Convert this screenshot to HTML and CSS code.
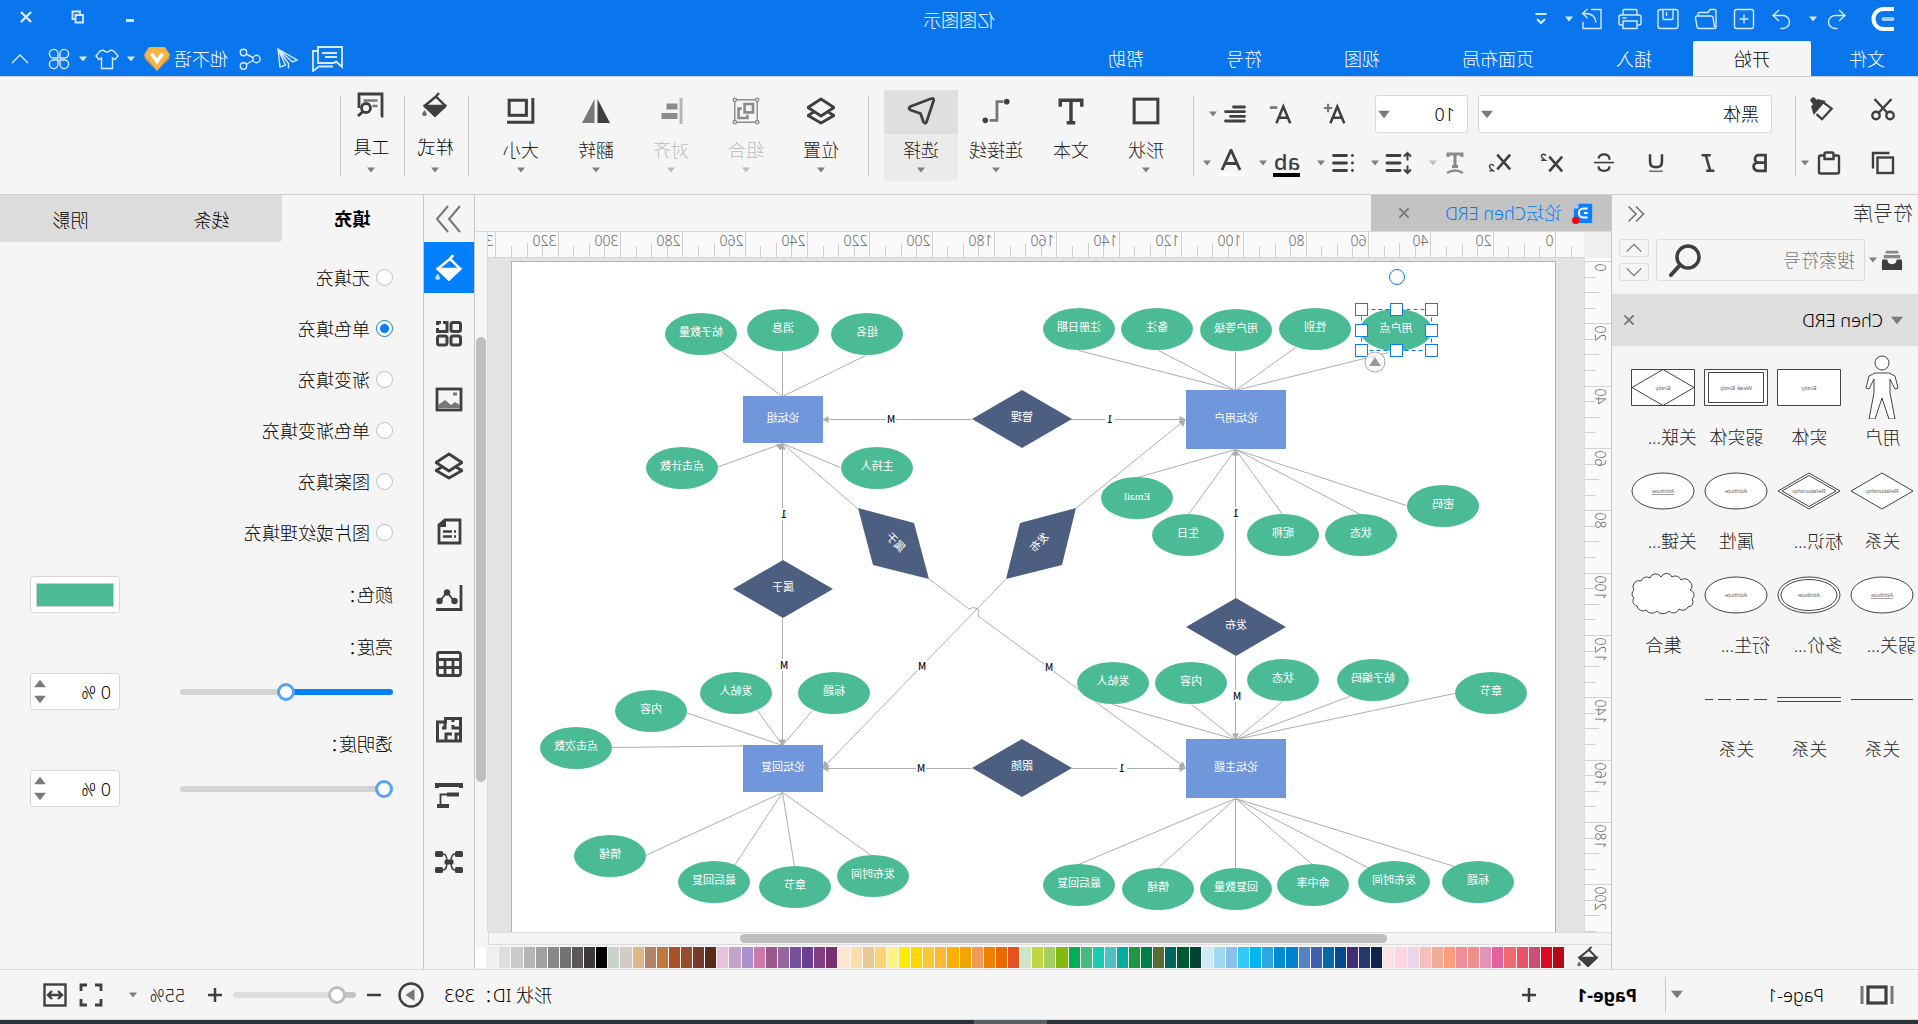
FILE: index.html
```html
<!DOCTYPE html>
<html lang="zh-CN">
<head>
<meta charset="utf-8">
<title>亿图图示</title>
<link rel="stylesheet" href="styles.css">
</head>
<body>
<svg class="defs" aria-hidden="true">
  <symbol id="logo" viewBox="0 0 24 24"><path d="M1 2h10.500a10 10 0 0 1 0 20H1" fill="none" stroke="#fff" stroke-width="4"/><path d="M2.500 12h9" stroke="#9fccfb" stroke-width="4" stroke-linecap="round"/></symbol>
  <symbol id="undo" viewBox="0 0 24 24"><path d="M9 3 3 8.500 9 14M3.500 8.500H13a6.500 6.500 0 0 1 0 13h-2.500"/></symbol>
  <symbol id="redo" viewBox="0 0 24 24"><path d="m15 3 6 5.500L15 14M20.500 8.500H11a6.500 6.500 0 0 0 0 13h2.500"/></symbol>
  <symbol id="new" viewBox="0 0 24 24"><rect x="2.500" y="2.500" width="19" height="19" rx="2"/><path d="M12 7.500v9M7.500 12h9"/></symbol>
  <symbol id="open" viewBox="0 0 24 24"><path d="M2 20V4q0-1.500 1.500-1.500H8l2 3h8.500q1.500 0 1.500 1.500v1.500M2 20q0 1.500 2 1.500h15q1.500 0 2-1.500l1.500-9.500q0-1.500-1.500-1.500H7Q5.500 9 5 10.500L3.500 20"/></symbol>
  <symbol id="save" viewBox="0 0 24 24"><rect x="2" y="2.500" width="20" height="19" rx="2.500"/><path d="M7 2.500V11q0 1.500 1.500 1.500h7Q17 12.500 17 11V2.500M13.500 5v4"/></symbol>
  <symbol id="print" viewBox="0 0 24 24"><path d="M5 8V4q0-1.500 1.500-1.500h11Q19 2.500 19 4v4M5 18H3q-2 0-2-2v-6q0-2 2-2h18q2 0 2 2v6q0 2-2 2h-2M5 14h14v7.500H5zM15.500 11h4"/></symbol>
  <symbol id="export" viewBox="0 0 24 24"><path d="M13 2.500H3v19h18V15M8 15.500C8.500 9 12 6 20.500 6.500M16.500 2l5 4.500-5 4.500"/></symbol>
  <symbol id="more" viewBox="0 0 24 24"><path d="M6.500 7h11M8 12l4 4 4-4"/></symbol>
  <symbol id="minimize" viewBox="0 0 24 24"><path d="M8 15.500h8" stroke-width="3"/></symbol>
  <symbol id="restore" viewBox="0 0 24 24"><path d="M7 10h7.500v7.500H7zM10 9V6.500h7.500V14H15" stroke-width="1.800"/></symbol>
  <symbol id="close" viewBox="0 0 24 24"><path d="m7 7 10 10M17 7 7 17"/></symbol>
  <symbol id="message" viewBox="0 0 32 26"><path d="M1 1h24v16H9l-2-1.500L1 21zM6 7h15M6 11h12M25 5h5v20l-6-4.500H10"/></symbol>
  <symbol id="send" viewBox="0 0 24 24"><path d="M21 2 2 13l4.500 2L21 2l-2 18-5.500-1.800L21 2 10.500 16.500v5"/></symbol>
  <symbol id="share" viewBox="0 0 24 24"><circle cx="5.500" cy="12" r="3.700"/><circle cx="18.500" cy="5.500" r="3.200"/><circle cx="18.500" cy="19" r="3.200"/><path d="m9 10.500 7-3.500M9 13.500l7 4"/></symbol>
  <symbol id="gem" viewBox="0 0 28 26"><path d="M6 1h16l5 8-13 16L1 9z" fill="#f6b344"/><path d="m1 9 13 16L27 9l-1 4-12 12L2 13z" fill="#d99d3c"/><path d="m8.500 7.500 5.500 8 5.500-8" fill="none" stroke="#fff" stroke-width="3.500"/></symbol>
  <symbol id="shirt" viewBox="0 0 24 24"><path d="M8 3q4 4 8 0l3 1 4 5-3 3.500-2.500-1.500v10.500h-11V11L4 12.500 1 9l4-5z"/></symbol>
  <symbol id="apps" viewBox="0 0 24 24"><path d="M11 11H6.500A4.300 4.300 0 1 1 11 6.500zM13 11h4.500A4.300 4.300 0 1 0 13 6.500zM11 13H6.500A4.300 4.300 0 1 0 11 17.500zM13 13h4.500A4.300 4.300 0 1 1 13 17.500z"/></symbol>
  <symbol id="up" viewBox="0 0 24 24"><path d="m4 16 8-8 8 8"/></symbol>
  <symbol id="down" viewBox="0 0 24 24"><path d="m4 8 8 8 8-8"/></symbol>
  <symbol id="caret" viewBox="0 0 8 6"><path d="M0 .5h8L4 5.500z" fill="currentColor" stroke="none"/></symbol>
  <symbol id="caret-up" viewBox="0 0 8 6"><path d="M0 5.500h8L4 .5z" fill="currentColor" stroke="none"/></symbol>

  <symbol id="cut" viewBox="0 0 24 24"><circle cx="5" cy="18.500" r="3.700"/><circle cx="19" cy="18.500" r="3.700"/><path d="M3.500 2 16 15.500M20.500 2 8 15.500"/></symbol>
  <symbol id="painter" viewBox="0 0 26 26"><path d="M22.500 3.500 19 7.500" stroke-width="6" stroke-linecap="round"/><path d="M12 5.500 2.500 12.500 13 24l6-5.500"/><path d="m11 5 10.500 12 2-6.500-6-7z" fill="currentColor"/></symbol>
  <symbol id="copy" viewBox="0 0 24 24"><rect x="2" y="6.500" width="15.500" height="15.500"/><path d="M5.500 2H22v15.500"/></symbol>
  <symbol id="paste" viewBox="0 0 24 24"><rect x="2" y="4.500" width="20" height="18" rx="1.500"/><path d="M7.500 3q0-1.500 1.500-1.500h6q1.500 0 1.500 1.500v5h-9z" fill="#f5f5f5"/></symbol>
  <symbol id="plus-a" viewBox="0 0 26 24"><path d="m3 22 7.500-18L18 22M5.500 16h10" stroke-width="2.800"/><path d="M20.500 1v9M16 5.500h9" stroke="#777"/></symbol>
  <symbol id="minus-a" viewBox="0 0 26 24"><path d="m3 22 7.500-18L18 22M5.500 16h10" stroke-width="2.800"/><path d="M17 5h8" stroke="#777" stroke-width="3"/></symbol>
  <symbol id="align-left" viewBox="0 0 24 24"><path d="M2.500 5h11M2.500 9.700h19M2.500 14.400h14M2.500 19h19" stroke-width="2.800" stroke-linecap="round"/></symbol>
  <symbol id="bold" viewBox="0 0 24 24"><path d="M6 3.500h7.500a4 4 0 0 1 0 8H6zM6 11.500h8.500a4.500 4.500 0 0 1 0 9H6z" stroke-width="3"/></symbol>
  <symbol id="italic" viewBox="0 0 24 24"><path d="M9 3.500h10M5 20.500h9M14.500 3.500l-5 17" stroke-width="2.800"/></symbol>
  <symbol id="underline" viewBox="0 0 24 24"><path d="M5.500 2.500v8q0 6 6.500 6t6.500-6v-8" stroke-width="2.800"/><path d="M4.500 21h15" stroke="#777" stroke-width="1.800"/></symbol>
  <symbol id="strike" viewBox="0 0 24 24"><path d="M18 7q-1-4.500-6-4.500T6 7v1.500M6 15.500q0 5 6 5t6-5"/><path d="M1 11.500h22" stroke-width="1.800"/></symbol>
  <symbol id="sup" viewBox="0 0 26 24"><path d="m2 5 14 16M16 5 2 21" stroke-width="2.800"/><path d="M20 4.500q0-2 2.200-2t2.200 2-4.200 4.500h4.600" stroke-width="1.500"/></symbol>
  <symbol id="sub" viewBox="0 0 26 24"><path d="m2 3 14 16M16 3 2 19" stroke-width="2.800"/><path d="M20 15.500q0-2 2.200-2t2.200 2-4.200 5h4.600" stroke-width="1.500"/></symbol>
  <symbol id="text-case" viewBox="0 0 24 24"><path d="M5 6V3h14v3M12 3v12M9 15.500h6" stroke-width="3"/><path d="M4 22q8-5 16 0"/></symbol>
  <symbol id="line-space" viewBox="0 0 28 24"><path d="M5.500 2.500v7M2 5.500l3.500-3.500L9 5.500M5.500 21.500v-7M2 18.500 5.500 22 9 18.500" stroke-width="2"/><path d="M13 4.500h13M13 12h13M13 19.500h13" stroke-width="2.800" stroke-linecap="round"/></symbol>
  <symbol id="bullets" viewBox="0 0 24 24"><path d="M2.500 4.500h.1M2.500 12h.1M2.500 19.500h.1M8.500 4.500h13M8.500 12h13M8.500 19.500h13" stroke-width="2.800" stroke-linecap="round"/></symbol>
  <symbol id="font-a" viewBox="0 0 28 28"><path d="m5 21 9-20 9 20M8 14.500h12" stroke-width="2.800"/><path d="M1 25.500h26" stroke="#fff" stroke-width="4"/></symbol>

  <symbol id="shape" viewBox="0 0 26 26"><rect x="2" y="2" width="22" height="22" stroke-width="2.800"/></symbol>
  <symbol id="text" viewBox="0 0 26 26"><path d="M3 9V3h20v6M13 3v20M9 24h8" stroke-width="3.200"/></symbol>
  <symbol id="connector" viewBox="0 0 30 26"><path d="M7 3h7v20h8" stroke="#777" stroke-width="3"/><circle cx="3.500" cy="3" r="3" fill="currentColor" stroke="none"/><circle cx="26.500" cy="23" r="3" fill="currentColor" stroke="none"/></symbol>
  <symbol id="select" viewBox="0 0 28 28"><path d="M2.500 1.500Q1 1.500 1.500 4l7 21q1 2.500 3 0l3-8.500 10-3.500q3-1.500 0-3.500L5 2z" stroke-width="2.800"/></symbol>
  <symbol id="layers" viewBox="0 0 28 28"><path d="M14 2 27 10.500 14 19 1 10.500zM7 15l-6 3.500L14 26l13-7.500-6-3.500" stroke-width="2.800" stroke-linejoin="round"/></symbol>
  <symbol id="group" viewBox="0 0 30 30"><path d="M3 3h24v24H3z" stroke-width="1.500"/><g fill="#f5f5f5" stroke-width="1.500"><circle cx="3" cy="3" r="1.800"/><circle cx="27" cy="3" r="1.800"/><circle cx="3" cy="27" r="1.800"/><circle cx="27" cy="27" r="1.800"/></g><path d="M7.500 7.500h9v9h-9zM19.500 12.500H23v10h-9.500V19" stroke-width="2.800"/></symbol>
  <symbol id="align" viewBox="0 0 26 28"><path d="M3 1v26" stroke="#b5b5b5" stroke-width="3"/><path d="M6.500 6.500h11v6h-11zM6.500 16h16v6h-16z" fill="currentColor" stroke="none"/></symbol>
  <symbol id="flip" viewBox="0 0 28 26"><path d="M12.500 1v24H0z" fill="currentColor" stroke="none"/><path d="M15.500 1v24H28z" fill="#777" stroke="none"/></symbol>
  <symbol id="size" viewBox="0 0 26 26"><path d="M2 1v22.500h24" stroke-width="2.800"/><rect x="8" y="3" width="16" height="14" stroke-width="2.800"/></symbol>
  <symbol id="bucket" viewBox="0 0 26 26"><path d="m9 1 4 4.500M12 4.500 23.500 14 13 23.500 2.500 14z" stroke-linejoin="round"/><path d="M3.500 14h19L13 23.500z" fill="currentColor"/><path d="M23.500 18q4.500 6 0 6t0-6" fill="currentColor" stroke="none" opacity=".75"/></symbol>
  <symbol id="tools" viewBox="0 0 28 26"><path d="M26 16V2H3v22h10M26 14V2" stroke-width="2.800" stroke-dasharray="60"/><path d="M7.500 8.500h14M7.500 14h5" stroke="#777"/><circle cx="19" cy="16" r="4.500" stroke-width="2.800"/><path d="m22 19.500 5 4.500" stroke-width="3"/></symbol>

  <symbol id="first" viewBox="0 0 24 24"><path d="m12 3-9 9 9 9M21 3l-9 9 9 9"/></symbol>
  <symbol id="last" viewBox="0 0 28 28"><path d="m3 1 11 13L3 27M15 1l11 13-11 13"/></symbol>
  <symbol id="library" viewBox="0 0 24 24"><path d="M5 2h14v3H5zM3 6.500h18V10H3z" fill="#888" stroke="none"/><path d="M1 13q0-1.500 1.500-1.500H7q0 5 5 5t5-5h4.500Q23 11.500 23 13v9q0 1-1 1H2q-1 0-1-1z" fill="currentColor" stroke="none"/></symbol>
  <symbol id="search" viewBox="0 0 34 34"><circle cx="14" cy="14" r="11" stroke-width="3.500"/><path d="m22 22 9 10" stroke-width="4" stroke-linecap="round"/></symbol>
  <symbol id="doc-logo" viewBox="0 0 24 24"><path d="M2 2h15l5 5v16H2z" fill="#0a80ff" stroke="none"/><path d="m17 2 5 5h-5z" fill="#9fd0ff" stroke="none"/><path d="M7 7h4.500a5 5 0 0 1 0 10H7M7 12h4" fill="none" stroke="#fff" stroke-width="2.200"/><circle cx="20" cy="20" r="4" fill="red" stroke="none"/></symbol>

  <symbol id="grid" viewBox="0 0 28 28"><g stroke-width="3"><rect x="2.500" y="2.500" width="9.500" height="9" rx="2"/><rect x="2.500" y="16" width="9.500" height="9" rx="2"/><rect x="16" y="16" width="9.500" height="9" rx="2"/><path d="M20 2.500h-4V11.500h9.500V8M22 2.500h3.500v2.500"/></g></symbol>
  <symbol id="picture" viewBox="0 0 28 28"><rect x="2" y="3" width="24" height="21" stroke-width="2.800"/><path d="M3 22v-3l5-3 4 3 6-5 7 5v3z" fill="#777" stroke="none"/><path d="M6 8h4" stroke-width="3" stroke="#777"/></symbol>
  <symbol id="page" viewBox="0 0 28 28"><path d="M3 2h15l6 5v18H3z" stroke-width="2.800"/><path d="M17 2v7h8z" fill="currentColor" stroke="none"/><path d="M7 13.500h2M11 13.500h9M7 18.500h2M11 18.500h9"/></symbol>
  <symbol id="chart" viewBox="0 0 28 28"><path d="M2 1v24.500h25" stroke-width="2.800"/><path d="m9 17 7-9 7 9" stroke-width="1.800"/><g fill="currentColor" stroke="none"><circle cx="8.500" cy="17" r="3.200"/><circle cx="16" cy="8.500" r="3.200"/><circle cx="23.500" cy="17" r="3.200"/></g></symbol>
  <symbol id="table" viewBox="0 0 28 28"><rect x="2.500" y="2.500" width="23" height="23" rx="2" stroke-width="2.800"/><path d="M2 9.500h24M2 17.500h24M10 10v15M18 10v15" stroke-width="2.800"/></symbol>
  <symbol id="plan" viewBox="0 0 28 28"><path d="M2.500 2.500h15V6h8v19h-23zM2 12h8V9M10 2.500V6M2 18h5v7M17 25v-7h-6M18 6v6h3" stroke-width="3"/></symbol>
  <symbol id="gantt" viewBox="0 0 28 28"><path d="M2 6V3h24v3M4 12.500h12M14 24h12" stroke-width="4"/><path d="M15 12.500h7.500V22" stroke-width="1.800"/></symbol>
  <symbol id="mind" viewBox="0 0 28 28"><g fill="currentColor" stroke="none"><rect x="0" y="3" width="8" height="6" rx="1.500"/><rect x="20" y="3" width="8" height="6" rx="1.500"/><rect x="0" y="19" width="8" height="6" rx="1.500"/><rect x="20" y="19" width="8" height="6" rx="1.500"/><rect x="9.500" y="11.500" width="9" height="5" rx="1.500"/></g><path d="M8 6q4 0 4 8t-4 8M20 6q-4 0-4 8t4 8" stroke-width="1.500"/></symbol>

  <symbol id="pages" viewBox="0 0 34 22"><path d="M2 2v18M32 2v18" stroke="#777" stroke-width="3"/><rect x="8" y="3" width="18" height="16" stroke-width="3.200"/></symbol>
  <symbol id="plus" viewBox="0 0 16 16"><path d="M8 1v14M1 8h14" stroke-width="2.500"/></symbol>
  <symbol id="minus" viewBox="0 0 16 16"><path d="M1 8h14" stroke-width="2.500"/></symbol>
  <symbol id="play" viewBox="0 0 26 26"><circle cx="13" cy="13" r="11.500"/><path d="m9.500 7 9 6-9 6z" fill="#777" stroke="none"/></symbol>
  <symbol id="fit" viewBox="0 0 24 24"><path d="M2 8V2h6M16 2h6v6M22 16v6h-6M8 22H2v-6" stroke-width="2.800"/></symbol>
  <symbol id="fit-width" viewBox="0 0 24 24"><rect x="1.500" y="1.500" width="21" height="21"/><path d="M6 12h12M9 8l-4 4 4 4M15 8l4 4-4 4"/></symbol>
</svg>

<div class="app">
  <header class="top">
    <div class="titlebar">
      <div class="quick">
        <svg class="ic logo"><use href="#logo"/></svg>
        <button aria-label="撤销"><svg class="ic thin"><use href="#undo"/></svg></button>
        <svg class="caret"><use href="#caret"/></svg>
        <button class="after-caret" aria-label="恢复"><svg class="ic thin"><use href="#redo"/></svg></button>
        <button aria-label="新建"><svg class="ic thin"><use href="#new"/></svg></button>
        <button aria-label="打开"><svg class="ic thin"><use href="#open"/></svg></button>
        <button aria-label="保存"><svg class="ic thin"><use href="#save"/></svg></button>
        <button aria-label="打印"><svg class="ic thin"><use href="#print"/></svg></button>
        <button aria-label="导出"><svg class="ic thin"><use href="#export"/></svg></button>
        <svg class="caret"><use href="#caret"/></svg>
        <button aria-label="更多"><svg class="ic thin2 bright"><use href="#more"/></svg></button>
      </div>
      <h1>亿图图示</h1>
      <div class="window">
        <button aria-label="最小化"><svg class="ic"><use href="#minimize"/></svg></button>
        <button aria-label="还原"><svg class="ic"><use href="#restore"/></svg></button>
        <button aria-label="关闭"><svg class="ic"><use href="#close"/></svg></button>
      </div>
    </div>
    <div class="menubar">
      <nav class="tabs">
        <button class="first-tab">文件</button><button class="on">开始</button><button>插入</button><button>页面布局</button><button>视图</button><button>符号</button><button>帮助</button>
      </nav>
      <div class="account">
        <button aria-label="消息"><svg class="ic-wide"><use href="#message"/></svg></button>
        <button aria-label="发送"><svg class="ic thin"><use href="#send"/></svg></button>
        <button aria-label="分享"><svg class="ic thin"><use href="#share"/></svg></button>
        <a href="#user" class="user">他不语<svg class="gem"><use href="#gem"/></svg></a>
        <svg class="caret"><use href="#caret"/></svg>
        <button class="skin" aria-label="皮肤"><svg class="ic thin"><use href="#shirt"/></svg></button>
        <svg class="caret"><use href="#caret"/></svg>
        <button class="skin" aria-label="应用"><svg class="ic thin"><use href="#apps"/></svg></button>
        <button aria-label="收起功能区"><svg class="ic thin"><use href="#up"/></svg></button>
      </div>
    </div>
  </header>

  <section class="ribbon">
    <div class="clipboard">
      <button aria-label="剪切"><svg class="ic"><use href="#cut"/></svg></button>
      <button aria-label="格式刷"><svg class="ic"><use href="#painter"/></svg></button>
      <button aria-label="复制"><svg class="ic"><use href="#copy"/></svg></button>
      <button aria-label="粘贴" class="split"><svg class="ic"><use href="#paste"/></svg><svg class="caret"><use href="#caret"/></svg></button>
    </div>
    <i class="sep"></i>
    <div class="font">
      <div class="row">
        <span class="combo face"><select aria-label="字体"><option>黑体</option></select><svg class="caret big"><use href="#caret"/></svg></span>
        <span class="combo pt"><select aria-label="字号"><option>10</option></select><svg class="caret big"><use href="#caret"/></svg></span>
        <button class="grow" aria-label="增大字号"><svg class="ic"><use href="#plus-a"/></svg></button>
        <button class="grow" aria-label="减小字号"><svg class="ic"><use href="#minus-a"/></svg></button>
        <button class="split" aria-label="对齐方式"><svg class="ic"><use href="#align-left"/></svg><svg class="caret"><use href="#caret"/></svg></button>
      </div>
      <div class="row styles">
        <button aria-label="加粗"><svg class="ic sm"><use href="#bold"/></svg></button>
        <button aria-label="斜体"><svg class="ic sm"><use href="#italic"/></svg></button>
        <button aria-label="下划线"><svg class="ic sm"><use href="#underline"/></svg></button>
        <button aria-label="删除线"><svg class="ic sm"><use href="#strike"/></svg></button>
        <button aria-label="上标"><svg class="ic"><use href="#sup"/></svg></button>
        <button aria-label="下标"><svg class="ic"><use href="#sub"/></svg></button>
        <button class="split dim" aria-label="文字方向"><svg class="ic"><use href="#text-case"/></svg><svg class="caret"><use href="#caret"/></svg></button>
        <button class="split" aria-label="行距"><svg class="ic-28"><use href="#line-space"/></svg><svg class="caret"><use href="#caret"/></svg></button>
        <button class="split" aria-label="项目符号"><svg class="ic"><use href="#bullets"/></svg><svg class="caret"><use href="#caret"/></svg></button>
        <button class="split" aria-label="文字背景"><span class="ab">ab</span><svg class="caret"><use href="#caret"/></svg></button>
        <button class="split" aria-label="字体颜色"><svg class="ic-28"><use href="#font-a"/></svg><svg class="caret"><use href="#caret"/></svg></button>
      </div>
    </div>
    <i class="sep"></i>
    <div class="tools">
      <button><svg><use href="#shape"/></svg>形状<svg class="caret"><use href="#caret"/></svg></button>
      <button><svg><use href="#text"/></svg>文本</button>
      <button><svg><use href="#connector"/></svg>连接线<svg class="caret"><use href="#caret"/></svg></button>
      <button class="on"><svg><use href="#select"/></svg>选择<svg class="caret"><use href="#caret"/></svg></button>
    </div>
    <i class="sep"></i>
    <div class="tools">
      <button><svg><use href="#layers"/></svg>位置<svg class="caret"><use href="#caret"/></svg></button>
      <button disabled><svg><use href="#group"/></svg>组合<svg class="caret"><use href="#caret"/></svg></button>
      <button disabled><svg><use href="#align"/></svg>对齐<svg class="caret"><use href="#caret"/></svg></button>
      <button><svg><use href="#flip"/></svg>翻转<svg class="caret"><use href="#caret"/></svg></button>
      <button><svg><use href="#size"/></svg>大小<svg class="caret"><use href="#caret"/></svg></button>
    </div>
    <i class="sep"></i>
    <div class="tools narrow"><button><svg><use href="#bucket"/></svg>样式<svg class="caret"><use href="#caret"/></svg></button></div>
    <i class="sep"></i>
    <div class="tools narrow"><button><svg><use href="#tools"/></svg>工具<svg class="caret"><use href="#caret"/></svg></button></div>
    <i class="sep"></i>
  </section>

  <main class="work">
    <aside class="symbols">
      <div class="head"><h2>符号库</h2><button aria-label="收起"><svg class="ic-20"><use href="#first"/></svg></button></div>
      <div class="find">
        <button class="lib" aria-label="符号库菜单"><svg class="ic-22"><use href="#library"/></svg><svg class="caret"><use href="#caret"/></svg></button>
        <label class="box"><input type="text" placeholder="搜索符号" aria-label="搜索符号"><svg class="glass"><use href="#search"/></svg></label>
        <div class="steps"><button aria-label="上"><svg class="ic-22 thin"><use href="#up"/></svg></button><button aria-label="下"><svg class="ic-22 thin"><use href="#down"/></svg></button></div>
      </div>
      <div class="section"><svg class="caret big"><use href="#caret"/></svg><h3>Chen ERD</h3><button aria-label="关闭"><svg class="ic-22"><use href="#close"/></svg></button></div>
      <ul class="list">
        <li><svg viewBox="0 0 64 64"><path d="M25 18h14l6 3 3 12-3 1-5-10v14l5 26h-6l-7-21-7 21h-6l5-26V24l-5 10-3-1 3-12z"/><circle cx="32" cy="8" r="7"/></svg><span>用户</span></li>
        <li><svg viewBox="0 0 64 64"><path d="M.5 14.500h63v36H.5z"/><text x="32" y="35">Entity</text></svg><span>实体</span></li>
        <li><svg viewBox="0 0 64 64"><path d="M.5 14.500h63v36H.5zM4.500 17.500h55v30h-55z"/><text x="32" y="35">Weak Entity</text></svg><span>弱实体</span></li>
        <li><svg viewBox="0 0 64 64"><path d="M.5 14.500h63v36H.5zM32 14.500l31 18-31 18-31-18z"/><text x="32" y="35">Entity</text></svg><span class="cut">关联...</span></li>
        <li><svg viewBox="0 0 64 64"><path d="m32 14 31 18-31 18L1 32z"/><text x="32" y="34">Relationship</text></svg><span>关系</span></li>
        <li><svg viewBox="0 0 64 64"><path d="m32 14 31 18-31 18L1 32zM32 16.500 59 32 32 47.500 5 32z"/><text x="32" y="34">Relationship</text></svg><span class="cut">标识...</span></li>
        <li><svg viewBox="0 0 64 64"><ellipse cx="32" cy="32" rx="31" ry="18"/><text x="32" y="34">Attribute</text></svg><span>属性</span></li>
        <li><svg viewBox="0 0 64 64"><ellipse cx="32" cy="32" rx="31" ry="18"/><text x="32" y="34" class="key">Attribute</text></svg><span class="cut">关键...</span></li>
        <li><svg viewBox="0 0 64 64"><ellipse cx="32" cy="32" rx="31" ry="18"/><text x="32" y="34" class="key">Attribute</text></svg><span class="cut">弱关...</span></li>
        <li><svg viewBox="0 0 64 64"><ellipse cx="32" cy="32" rx="31" ry="18"/><ellipse cx="32" cy="32" rx="28" ry="15.500"/><text x="32" y="34">Attribute</text></svg><span class="cut">多价...</span></li>
        <li><svg viewBox="0 0 64 64"><ellipse cx="32" cy="32" rx="31" ry="18"/><text x="32" y="34">Attribute</text></svg><span class="cut">衍生...</span></li>
        <li><svg viewBox="0 0 64 64"><path d="M5 27a5 5 0 0 1 0-8 6 6 0 0 1 9-2 6 6 0 0 1 9-3 6 6 0 0 1 11 0 6 6 0 0 1 11 1 6 6 0 0 1 9 3 6 6 0 0 1 7 9 5 5 0 0 1 0 8 5 5 0 0 1-3 8 6 6 0 0 1-9 4 7 7 0 0 1-11 1 8 8 0 0 1-12 0 6 6 0 0 1-10-2 6 6 0 0 1-9-2 5 5 0 0 1-4-8 5 5 0 0 1 2-9z"/></svg><span>集合</span></li>
        <li><svg viewBox="0 0 64 64"><path d="M1 32.500h62"/></svg><span>关系</span></li>
        <li><svg viewBox="0 0 64 64"><path d="M0 30.500h64M0 34.500h64"/></svg><span>关系</span></li>
        <li><svg viewBox="0 0 64 64"><path d="M1 32.500h62" stroke-dasharray="13 5"/></svg><span>关系</span></li>
      </ul>
    </aside>

    <section class="doc">
      <div class="doctabs"><div class="doctab"><svg class="ic-22"><use href="#doc-logo"/></svg><span>论坛Chen ERD</span><button aria-label="关闭"><svg class="ic-22"><use href="#close"/></svg></button></div></div>
      <div class="stage">
        <div class="corner"></div>
        <svg class="ruler-x" id="ruler-x"></svg>
        <div class="vbar"><i></i></div>
        <svg class="ruler-y" id="ruler-y"></svg>
        <div class="canvas"><div class="sheet"><svg id="diagram" width="1043" height="670" viewBox="363 262 1043 670"></svg></div></div>
        <div class="hbar"><i></i></div>
      </div>
      <div class="palette"><svg class="ic-22"><use href="#bucket"/></svg><div id="swatches"></div></div>
    </section>

    <nav class="dock">
      <button class="collapse" aria-label="收起"><svg class="ic-28 thin2"><use href="#last"/></svg></button>
      <button class="on" aria-label="填充"><svg class="ic-28"><use href="#bucket"/></svg></button>
      <button aria-label="主题"><svg class="ic-28"><use href="#grid"/></svg></button>
      <button aria-label="图片"><svg class="ic-28"><use href="#picture"/></svg></button>
      <button aria-label="图层"><svg class="ic-28"><use href="#layers"/></svg></button>
      <button aria-label="页面"><svg class="ic-28"><use href="#page"/></svg></button>
      <button aria-label="图表"><svg class="ic-28"><use href="#chart"/></svg></button>
      <button aria-label="表格"><svg class="ic-28"><use href="#table"/></svg></button>
      <button aria-label="平面图"><svg class="ic-28"><use href="#plan"/></svg></button>
      <button aria-label="甘特图"><svg class="ic-28"><use href="#gantt"/></svg></button>
      <button aria-label="思维导图"><svg class="ic-28"><use href="#mind"/></svg></button>
    </nav>

    <aside class="props">
      <div class="ptabs"><button class="on">填充</button><button class="edge">线条</button><button>阴影</button></div>
      <div class="form">
        <label class="opt"><input type="radio" name="fill">无填充</label>
        <label class="opt"><input type="radio" name="fill" checked>单色填充</label>
        <label class="opt"><input type="radio" name="fill">渐变填充</label>
        <label class="opt"><input type="radio" name="fill">单色渐变填充</label>
        <label class="opt"><input type="radio" name="fill">图案填充</label>
        <label class="opt"><input type="radio" name="fill">图片或纹理填充</label>
        <div class="line color"><label for="color">颜色：</label><button id="color" class="chip"><i></i></button></div>
        <label class="cap" for="bright">亮度：</label>
        <div class="line"><input id="bright" type="range" class="mid" min="0" max="100" value="50"><span class="spin"><input type="text" value="0 %" aria-label="亮度值"><span><svg class="caret big"><use href="#caret-up"/></svg><svg class="caret big"><use href="#caret"/></svg></span></span></div>
        <label class="cap low" for="alpha">透明度：</label>
        <div class="line"><input id="alpha" type="range" min="0" max="100" value="0"><span class="spin"><input type="text" value="0 %" aria-label="透明度值"><span><svg class="caret big"><use href="#caret-up"/></svg><svg class="caret big"><use href="#caret"/></svg></span></span></div>
      </div>
    </aside>
  </main>

  <footer class="status">
    <button aria-label="页面列表"><svg class="pages"><use href="#pages"/></svg></button>
    <span class="combo page"><select aria-label="页面"><option>Page-1</option></select><svg class="caret big"><use href="#caret"/></svg></span>
    <i class="sep"></i>
    <a href="#page-1" class="current">Page-1</a>
    <button class="add" aria-label="添加页面"><svg class="ic-16"><use href="#plus"/></svg></button>
    <span class="info">形状 ID：393</span>
    <button class="run" aria-label="演示"><svg class="ic-26"><use href="#play"/></svg></button>
    <button aria-label="缩小"><svg class="ic-16"><use href="#minus"/></svg></button>
    <input class="zoom" type="range" min="0" max="100" value="10" aria-label="缩放">
    <button aria-label="放大"><svg class="ic-16"><use href="#plus"/></svg></button>
    <span class="pct">55%</span>
    <svg class="caret"><use href="#caret"/></svg>
    <button class="fit" aria-label="适应页面"><svg class="ic"><use href="#fit"/></svg></button>
    <button class="fit" aria-label="适应宽度"><svg class="ic"><use href="#fit-width"/></svg></button>
  </footer>
  <div class="taskbar"><i></i></div>
</div>
<script src="app.js"></script>
</body>
</html>
```
FILE: styles.css
```css
* { box-sizing: border-box; }
body { margin: 0; background: #f5f5f5; overflow: hidden; }
.defs { display: none; }

/* The whole window is shown as a mirror image. */
.app {
  transform: scaleX(-1);
  display: grid;
  grid-template-columns: minmax(0, 1fr);
  grid-template-rows: auto auto minmax(0, 1fr) auto auto;
  height: 100vh;
  font: 300 18px/24px "Noto Sans", "Noto Sans CJK SC", sans-serif;
  color: #000;
}
h1, h2, h3, ul { margin: 0; padding: 0; font: inherit; list-style: none; }
button { margin: 0; padding: 0; border: 0; background: none; font: inherit; color: inherit; display: flex; align-items: center; justify-content: center; flex: none; }
input, select { font: inherit; color: inherit; margin: 0; }
a { color: inherit; text-decoration: none; }
svg { fill: none; stroke: currentColor; stroke-width: 2.4; flex: none; }
.thin { stroke-width: 1.4; }
.thin2 { stroke-width: 2; color: #777; }
.bright { color: #d8eafd; }
.ic { width: 24px; height: 24px; }
.sm { width: 22px; height: 22px; }
.ic-16 { width: 16px; height: 16px; }
.ic-20 { width: 20px; height: 20px; }
.ic-22 { width: 22px; height: 22px; }
.ic-26 { width: 26px; height: 26px; }
.ic-28 { width: 28px; height: 28px; }
.ic-wide { width: 32px; height: 26px; stroke-width: 1.8; }
.caret { width: 8px; height: 6px; color: #808080; stroke: none; }
.caret.big { width: 12px; height: 9px; color: #7a7a7a; }

/* Title and tabs */
.top { background: #0a76ed; color: #d8eafd; border-bottom: 1px solid #ccd0d4; }
.top .caret { color: #d8eafd; }
.titlebar { display: grid; grid-template-columns: 1fr auto 1fr; height: 41px; }
.titlebar h1 { color: #fff; padding-top: 8px; }
.quick { display: flex; align-items: center; height: 38px; padding-left: 23px; }
.logo { margin-right: 15px; }
.quick button { width: 39px; height: 36px; }
.quick .after-caret { margin-left: 7px; }
.quick .after-caret ~ button { width: 38px; }
.quick .caret + button:last-child { margin-left: 5px; }
.window { display: flex; justify-content: flex-end; align-items: center; height: 34px; }
.window button { width: 52px; height: 34px; }
.menubar { display: flex; justify-content: space-between; height: 35px; }
.tabs { display: flex; color: #fff; }
.tabs button { padding: 0 41px; }
.tabs .first-tab { padding-left: 33px; padding-right: 38px; }
.tabs .on { background: #f5f5f5; color: #000; border-radius: 2px 2px 0 0; }
.account { display: flex; align-items: center; padding-right: 2px; }
.account button { width: 37px; height: 34px; }
.account button:first-child { width: 42px; }
.account .skin { width: 40px; }
.user { display: flex; align-items: center; color: #fff; margin-left: 4px; margin-right: 8px; gap: 3px; }
.gem { width: 28px; height: 26px; stroke: none; }

/* Ribbon */
.ribbon { display: flex; align-items: flex-start; height: 118px; border-bottom: 1px solid #d0d0d0; background: #f5f5f5; color: #3f3f3f; }
.sep { width: 1px; height: 80px; margin-top: 19px; background: #cbcbcb; flex: none; }
.clipboard { display: grid; grid-template-columns: 36px 46px; grid-auto-rows: 36px; gap: 18px 20px; padding: 14px 3px 0 17px; }
.split { gap: 6px; width: 48px; margin-right: 8px; }
.clipboard .split { gap: 8px; }
.font { padding: 18px 0 0 23px; width: 601px; flex: none; }
.row { display: flex; align-items: center; height: 38px; }
.combo { display: flex; align-items: center; height: 38px; border: 1px solid #d8d8dc; border-radius: 3px; background: #fff; padding-right: 2px; }
.combo select { flex: 1; width: 0; height: 100%; appearance: none; border: 0; background: none; padding: 0 0 0 12px; color: #000; }
.face { width: 294px; margin-right: 10px; }
.pt { width: 93px; margin-right: 13px; }
.grow { width: 54px; height: 36px; }
.row .grow + .split { margin-left: 2px; }
.styles { margin: 11px 0 0 -14px; }
.styles button { width: 52px; height: 38px; }
.styles .split { width: 48px; }
.styles button + .dim { margin-left: 2px; }
.dim { color: #8a8a8a; }
.dim .caret { color: #bdbdbd; }
.ab { font: 500 22px/24px "Noto Sans", sans-serif; border-bottom: 4px solid #000; width: 27px; height: 28px; text-align: center; }
.tools { display: flex; gap: 1px; padding: 13px 15px 0 10px; }
.tools button { flex-direction: column; justify-content: flex-start; width: 74px; height: 91px; border-radius: 2px; line-height: 20px; color: #222; }
.tools button > svg:first-child { width: 28px; height: 44px; padding: 7px 0 9px; color: #3f3f3f; margin-bottom: 6px; }
.tools .caret { margin-top: 7px; }
.tools .on { background: linear-gradient(#dfdfdf 44px, #ebebeb 44px); }
.tools button:disabled { color: #bcbcbc; }
.tools button:disabled > svg:first-child { color: #8c8c8c; }
.tools button:disabled .caret { color: #bcbcbc; }
.tools.narrow { padding: 13px 0 0 2px; }
.tools.narrow button { width: 61px; color: #000; }
.tools.narrow button > svg:first-child { height: 38px; padding: 2px 0 10px; margin-bottom: 9px; }
.tools.narrow .caret { margin-top: 10px; }

/* Work area */
.work { display: grid; grid-template-columns: 307px minmax(0, 1fr) 52px 423px; min-height: 0; background: #f5f5f5; }
.symbols { border-right: 1px solid #c8c8c8; overflow: hidden; }
.head { display: flex; justify-content: space-between; align-items: center; height: 37px; padding: 0 14px 0 5px; color: #333; }
.head h2 { font-size: 20px; }
.head button { color: #777; }
.head svg { stroke-width: 2; }
.find { display: flex; padding: 7px 7px 0 15px; height: 62px; align-items: flex-start; }
.lib { height: 42px; gap: 4px; color: #3f3f3f; margin-right: 4px; }
.box { display: flex; align-items: center; flex: 1; height: 42px; border: 1px solid #dcdcdc; border-radius: 3px; padding: 0 11px 0 9px; margin-right: 7px; }
.box input { flex: 1; width: 0; border: 0; padding: 0; background: none; }
.box input::placeholder { color: #777; }
.glass { width: 34px; height: 34px; color: #3f3f3f; }
.steps { display: grid; gap: 6px; }
.steps button { width: 30px; height: 18px; border: 1px solid #dcdcdc; border-radius: 3px; color: #777; }
.section { display: flex; align-items: center; height: 52px; background: #dfdfdf; padding: 0 6px 0 15px; gap: 8px; }
.section h3 { flex: 1; }
.section button, .doctab button { color: #777; }
.section button svg, .doctab button svg { stroke-width: 2; }
.list { display: grid; grid-template-columns: repeat(4, 73px); padding-top: 5px; }
.list li { display: grid; gap: 6px; justify-items: center; padding: 4px 2px 6px 0; color: #222; }
.list svg { width: 64px; height: 64px; stroke: #444; stroke-width: 1; fill: #fff; }
.list text { font: 6px "Liberation Sans", sans-serif; text-anchor: middle; fill: #666; stroke: none; }
.list .key { text-decoration: underline; }
.list .cut { justify-self: start; padding-left: 2px; }

.doc { display: grid; grid-template-rows: 37px minmax(0, 1fr) 24px; min-width: 0; }
.doctabs { border-bottom: 1px solid #d8d8d8; }
.doctab { display: flex; align-items: center; width: 240px; height: 36px; background: #c3c3c3; color: #0a7cf5; padding: 0 22px 0 17px; gap: 10px; }
.doctab span { flex: 1; white-space: nowrap; }
.stage { display: grid; grid-template-columns: 27px minmax(0, 1fr) 13px; grid-template-rows: 26px minmax(0, 1fr) 13px; }
.stage > svg { width: 100%; height: 100%; overflow: hidden; }
.corner { background: #efefef; }
.stage > .ruler-x { background: #fafafa; border-bottom: 1px solid #d4d4d4; overflow-x: clip; overflow-y: visible; }
.ruler-y { background: #fafafa; border-right: 1px solid #dcdcdc; }
.tick { stroke: #d2d2d2; stroke-width: 1; }
.num { font: 300 14px "Noto Sans", sans-serif; fill: #666; stroke: none; }
.vbar { grid-column: 3; grid-row: 1 / 3; border-left: 1px solid #dcdcdc; padding: 105px 1px 0; background: #f5f5f5; }
.vbar i { display: block; height: 445px; border-radius: 5px; background: #bfbfbf; }
.canvas { background: #e3e3e3; overflow: hidden; padding: 3px 0 0 28px; }
.sheet { width: 1045px; background: #fff; border: 1px solid #b2b2b2; border-bottom: 0; }
.sheet svg { display: block; }
.hbar { grid-column: 1 / 3; grid-row: 3; border: solid #dcdcdc; border-width: 1px 1px 1px 0; padding: 1px 251px 0 224px; }
.hbar i { display: block; height: 9px; border-radius: 5px; background: #bfbfbf; }
.palette { display: flex; align-items: center; padding-left: 12px; gap: 13px; color: #3f3f3f; }
#swatches { display: flex; gap: 1px; flex: 1; height: 21px; }
#swatches i { flex: 1; }

.dock { border: solid #c8c8c8; border-width: 0 1px; display: flex; flex-direction: column; gap: 15px; color: #3f3f3f; overflow: hidden; }
.dock button { height: 51px; width: 100%; }
.dock .collapse { height: 47px; margin-bottom: -15px; }
.dock .on { background: #0080ff; color: #fff; }

.ptabs { display: grid; grid-template-columns: repeat(3, 1fr); height: 47px; }
.ptabs button { background: #dcdcdc; padding-top: 3px; }
.ptabs .on { background: none; font-weight: 700; padding-top: 0; }
.ptabs .edge { border-bottom-left-radius: 4px; }
.form { padding: 10px 30px 0; }
.opt { display: flex; align-items: center; height: 51px; gap: 6px; }
.opt input { appearance: none; width: 17px; height: 17px; border: 1px solid #bdbdbd; border-radius: 50%; background: #fff; }
.opt input:checked { border-color: #0a7cf5; background: radial-gradient(#0a7cf5 4px, #fff 5px); }
.line { display: flex; align-items: center; justify-content: space-between; height: 37px; }
.line.color { margin: 18px 0 17px; }
.chip { width: 90px; height: 37px; border: 1px solid #d8d8d8; border-radius: 3px; background: #fff; }
.chip i { width: 78px; height: 24px; background: #4bbb96; border: 1px solid #d0d0d0; }
.cap { display: block; height: 43px; padding-top: 5px; }
.cap.low { height: 60px; padding-top: 22px; }
.spin { display: flex; align-items: center; width: 90px; height: 37px; border: 1px solid #d8d8d8; border-radius: 3px; background: #fff; padding: 0 3px 0 8px; }
.spin input { flex: 1; width: 0; border: 0; padding: 0; background: none; }
.spin > span { display: grid; gap: 7px; }
input[type="range"] { appearance: none; width: 213px; height: 18px; background: none; }
input[type="range"]::-webkit-slider-runnable-track { height: 6px; border-radius: 3px; background: #d3d3d3; }
input.mid[type="range"]::-webkit-slider-runnable-track { background: linear-gradient(90deg, #0080ff 50%, #d3d3d3 50%); }
input[type="range"]::-webkit-slider-thumb { appearance: none; width: 18px; height: 18px; margin-top: -6px; border: 3px solid #57a4f5; border-radius: 50%; background: #fff; }

/* Status bar */
.status { display: flex; align-items: center; height: 51px; border-top: 1px solid #dadada; border-bottom: 1px solid #dadada; padding: 0 43px 0 24px; color: #3f3f3f; background: #f5f5f5; }
.pages { width: 34px; height: 22px; }
.status .page { border: 0; background: none; width: 179px; margin: 0 3px 0 12px; }
.status .page select { padding-left: 24px; }
.status .sep { height: 36px; margin: 0 28px 0 0; }
.current { font-weight: 700; color: #000; margin-right: 40px; }
.info { margin-left: auto; margin-right: 20px; color: #000; white-space: nowrap; }
.run { margin-right: 16px; }
.status .zoom { width: 123px; margin: 0 10px; }
.status input.zoom::-webkit-slider-runnable-track { background: linear-gradient(90deg, #c4c4c4 15%, #dedede 15%); }
.status input.zoom::-webkit-slider-thumb { border-color: #bdbdbd; }
.pct { margin: 0 13px 0 22px; color: #222; }
.fit { margin-left: 12px; }
.caret + .fit { margin-left: 26px; }
.taskbar { height: 4px; background: #2c3237; padding-left: 871px; }
.taskbar i { display: block; width: 73px; height: 4px; background: #5d6062; }

/* Diagram */
.link { stroke: #abb0ae; stroke-width: 1; }
.tip { fill: #a8aeab; stroke: none; }
.attr { fill: #4bbb96; stroke: none; }
.entity { fill: #7096db; stroke: none; }
.rel { fill: #4c5f80; stroke: none; }
.name { font: 400 11px "Liberation Serif", "Noto Sans CJK SC", sans-serif; fill: #fff; stroke: none; text-anchor: middle; }
.card { font: 500 10px "Noto Sans CJK SC", sans-serif; fill: #111; stroke: none; text-anchor: middle; }
.gapbox { fill: #fff; stroke: none; }
.sel { stroke: #0a7cf5; stroke-width: 1; }
.handle { fill: #fff; stroke: #0a7cf5; stroke-width: 1; }
.hint { fill: #fff; fill-opacity: .6; stroke: #a5a5a5; stroke-width: 1; }
```
FILE: app.js
```js
const NS = "http://www.w3.org/2000/svg";
function add(parent, tag, attrs, text) {
  const el = document.createElementNS(NS, tag);
  for (const k in attrs) el.setAttribute(k, attrs[k]);
  if (text !== undefined) el.textContent = text;
  parent.appendChild(el);
  return el;
}

// Colour strip
const colors = "b50a16 da0b1c c94f77 e95464 ec6a70 e5609f e296b7 ef8f89 f08f9c ff9e79 f0ac97 f6bfbc ead6e8 ffd5e4 ffe0e5 0f2350 23386f 432d79 094a8e 0469a6 3f62ae 5383c4 0081cc 008ccf 2ea7e0 00b4ef 31c8fa 8ac1ea a0d8ef cfeaf5 004335 005a31 00645f 576d33 007f48 1f963f 00ad9f 52bfc2 19ccb4 48ba7e 00b055 82ba10 a3cf62 bfd640 cde6c7 e5511f ec6900 f18200 f29b55 f2a500 ffaf00 fdb933 fac932 ffd800 ffed00 fdf283 ffd370 eaca94 ffdca8 fde8cf 782f70 813d84 683f93 745198 95669d 9c5888 cb7aae ab90cd c6a3c8 eac1da 59291a 733a2e 964d28 a65226 bf783e b38368 deb887 d3cbc6 c9d3cb 000000 3e3938 595757 717171 888888 9fa0a0 b4b5b5 c9caca dcdddd efefef ffffff".split(" ");
const strip = document.getElementById("swatches");
for (const c of colors) {
  const i = document.createElement("i");
  i.style.background = "#" + c;
  strip.appendChild(i);
}

// Rulers: one step is 5 units, a label every 20
const STEP = 62.33 / 4;
const rx = document.getElementById("ruler-x");
const ry = document.getElementById("ruler-y");
for (let n = -1; n < 72; n++) {
  const x = Math.round(28 + n * STEP) + 0.5;
  add(rx, "path", { class: "tick", d: `M${x} ${n % 4 === 0 ? 0 : n % 2 ? 14 : 11}V26` });
  if (n >= 0 && n % 4 === 0) add(rx, "text", { class: "num", x: x + 2, y: 14 }, n * 5);
}
for (let n = 0; n < 44; n++) {
  const y = Math.round(3 + n * STEP) + 0.5;
  add(ry, "path", { class: "tick", d: `M${n % 4 === 0 ? 0 : n % 2 ? 15 : 12} ${y}H27` });
  if (n % 4 === 0) add(ry, "text", { class: "num", transform: `translate(16 ${y + 2}) rotate(-90)`, "text-anchor": "end" }, n * 5);
}

// Diagram
const dg = document.getElementById("diagram");
const fans = [
  [682, 390, [[529, 352], [622, 347], [682, 351], [759, 350], [839, 350]]],
  [682, 449, [[511, 505], [557, 514], [635, 514], [729, 514], [780, 477], [682, 598]]],
  [1135, 396, [[1052, 355], [1135, 351], [1196, 351]]],
  [1135, 443, [[1077, 467], [1201, 467], [1135, 560], [1060, 508]]],
  [682, 739, [[805, 704], [726, 704], [635, 701], [568, 696], [463, 693], [682, 656]]],
  [682, 798, [[839, 864], [760, 868], [682, 868], [605, 864], [550, 867], [463, 866]]],
  [1135, 745, [[1105, 710], [1160, 710], [1232, 712], [1307, 747], [1135, 618]]],
  [1135, 792, [[1046, 855], [1123, 866], [1183, 865], [1272, 855]]],
  [732, 419, [[847, 419], [842, 508]]],
  [1095, 419, [[946, 419]]],
  [732, 768, [[846, 768]]],
  [1095, 768, [[946, 768], [912, 579]]]
];
const off = v => v + 0.5;
for (const [x, y, ends] of fans)
  for (const [a, b] of ends) add(dg, "path", { class: "link", d: `M${off(x)} ${off(y)}L${off(a)} ${off(b)}` });
add(dg, "path", { class: "link", d: "M989 579L949 609Q945 606 940 609 938 612 940 616L732 768" });

const tips = [[682, 449, 0], [682, 739, 180], [732, 419, -90], [1095, 419, 90], [1135, 443, 0], [1135, 745, 180],
  [732, 768, -90], [1095, 768, 90], [732, 420, -52], [1135, 443, -49], [732, 767, -126], [1095, 767, 135]];
for (const [x, y, r] of tips) {
  // Tips on the right side of a shape point left, those on the left side point right
  add(dg, "path", { class: "tip", d: "M0 0L3.500 6H-3.500Z", transform: `translate(${off(x)} ${off(y)}) rotate(${r})` });
}

const attrs = [
  [522, 330, "用户点"], [603, 329, "性别"], [682, 330, "用户等级"], [761, 329, "备注"], [839, 329, "注册日期"],
  [475, 506, "密码"], [557, 535, "状态"], [635, 535, "昵称"], [730, 535, "生日"], [781, 498, "Email"],
  [1051, 334, "组名"], [1135, 330, "消息"], [1217, 334, "帖子数量"], [1041, 468, "主持人"], [1236, 468, "点击计数"],
  [805, 683, "发帖人"], [727, 683, "内容"], [635, 680, "状态"], [545, 680, "帖子编码"], [427, 693, "章节"],
  [440, 882, "标题"], [524, 882, "发布时间"], [605, 885, "命中率"], [682, 889, "回复数量"], [760, 889, "情绪"], [839, 885, "最后回复"],
  [1084, 693, "标题"], [1182, 693, "发帖人"], [1267, 711, "内容"], [1342, 748, "点击次数"],
  [1045, 876, "发布时间"], [1123, 887, "章节"], [1204, 882, "最后回复"], [1308, 856, "情绪"]
];
for (const [x, y, t] of attrs) {
  add(dg, "ellipse", { class: "attr", cx: x, cy: y, rx: 36, ry: 21 });
  add(dg, "text", { class: "name", x, y: y + 2 }, t);
}
for (const [x, y, w, h, t] of [[632, 390, 100, 59, "论坛用户"], [1095, 396, 80, 47, "论坛组"], [632, 739, 100, 59, "论坛主题"], [1095, 745, 80, 47, "论坛回复"]]) {
  add(dg, "rect", { class: "entity", x, y, width: w, height: h });
  add(dg, "text", { class: "name", x: x + w / 2, y: y + h / 2 + 2 }, t);
}
for (const [x, y, t] of [[896, 419, "管理"], [896, 768, "跟随"], [682, 627, "发布"], [1135, 589, "属于"]]) {
  add(dg, "path", { class: "rel", d: `M${x - 50} ${y}l50-29 50 29-50 29z` });
  add(dg, "text", { class: "name", x, y: y + 2 }, t);
}
add(dg, "path", { class: "rel", d: "M842 508l14 57 56 14-14-56z" });
add(dg, "text", { class: "name", transform: "translate(876 545) rotate(45)" }, "发布");
add(dg, "path", { class: "rel", d: "M1060 508l-56 15-15 56 56-14z" });
add(dg, "text", { class: "name", transform: "translate(1025 545) rotate(-45)" }, "属于");

for (const [x, y, t] of [[808, 419, "1"], [1027, 419, "M"], [682, 513, "1"], [681, 696, "M"], [1134, 514, "1"], [1134, 665, "M"], [796, 768, "1"], [997, 768, "M"], [996, 666, "M"], [869, 667, "M"]]) {
  add(dg, "rect", { class: "gapbox", x: x - 5, y: y - 6, width: 10, height: 12 });
  add(dg, "text", { class: "card", x, y: y + 4 }, t);
}

// Selection frame
add(dg, "rect", { class: "sel", x: 486.5, y: 309.5, width: 70, height: 41, "stroke-dasharray": "4 3" });
for (const [x, y] of [[486, 309], [521, 309], [556, 309], [486, 330], [556, 330], [486, 350], [521, 350], [556, 350]])
  add(dg, "rect", { class: "handle", x: x - 5.5, y: y - 5.5, width: 12, height: 12 });
add(dg, "circle", { class: "handle", cx: 521, cy: 277, r: 7.5 });
add(dg, "circle", { class: "hint", cx: 543, cy: 362, r: 10 });
add(dg, "path", { d: "M537 366l6-9 6 9z", fill: "#999", stroke: "none" });
```
